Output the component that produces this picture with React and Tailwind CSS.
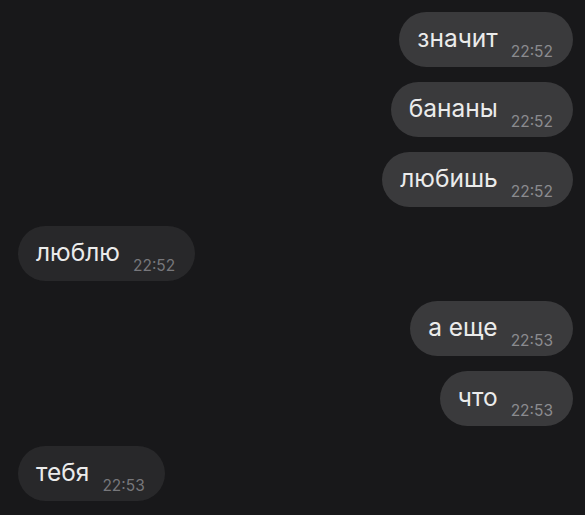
export default function App() {
  const msgs = [
    { t: "значит", time: "22:52", out: true, mt: 12 },
    { t: "бананы", time: "22:52", out: true, mt: 15 },
    { t: "любишь", time: "22:52", out: true, mt: 15 },
    { t: "люблю", time: "22:52", out: false, mt: 19 },
    { t: "а еще", time: "22:53", out: true, mt: 20 },
    { t: "что", time: "22:53", out: true, mt: 15 },
    { t: "тебя", time: "22:53", out: false, mt: 20 },
  ];
  return (
    <div
      className="w-[585px] h-[515px] bg-[#18181a] flex flex-col px-[12px] overflow-hidden"
      style={{ fontFamily: "Inter, 'Noto Sans', sans-serif" }}
    >
      {msgs.map((m, i) => (
        <div
          key={i}
          className={m.out ? "flex justify-end" : "flex justify-start pl-[6px]"}
          style={{ marginTop: m.mt }}
        >
          <div
            className={
              "flex h-[55px] pl-[18px] pr-[20px] pt-[12px] rounded-full " +
              (m.out ? "bg-[#3a3a3c]" : "bg-[#28282a]")
            }
          >
            <span className="text-[24.5px] leading-[29px] text-[#ebebeb]">{m.t}</span>
            <span
              className={
                "ml-[13px] mt-[20px] text-[15.5px] leading-[16px] " +
                (m.out ? "text-[#8b8b8f]" : "text-[#77777b]")
              }
            >
              {m.time}
            </span>
          </div>
        </div>
      ))}
    </div>
  );
}
